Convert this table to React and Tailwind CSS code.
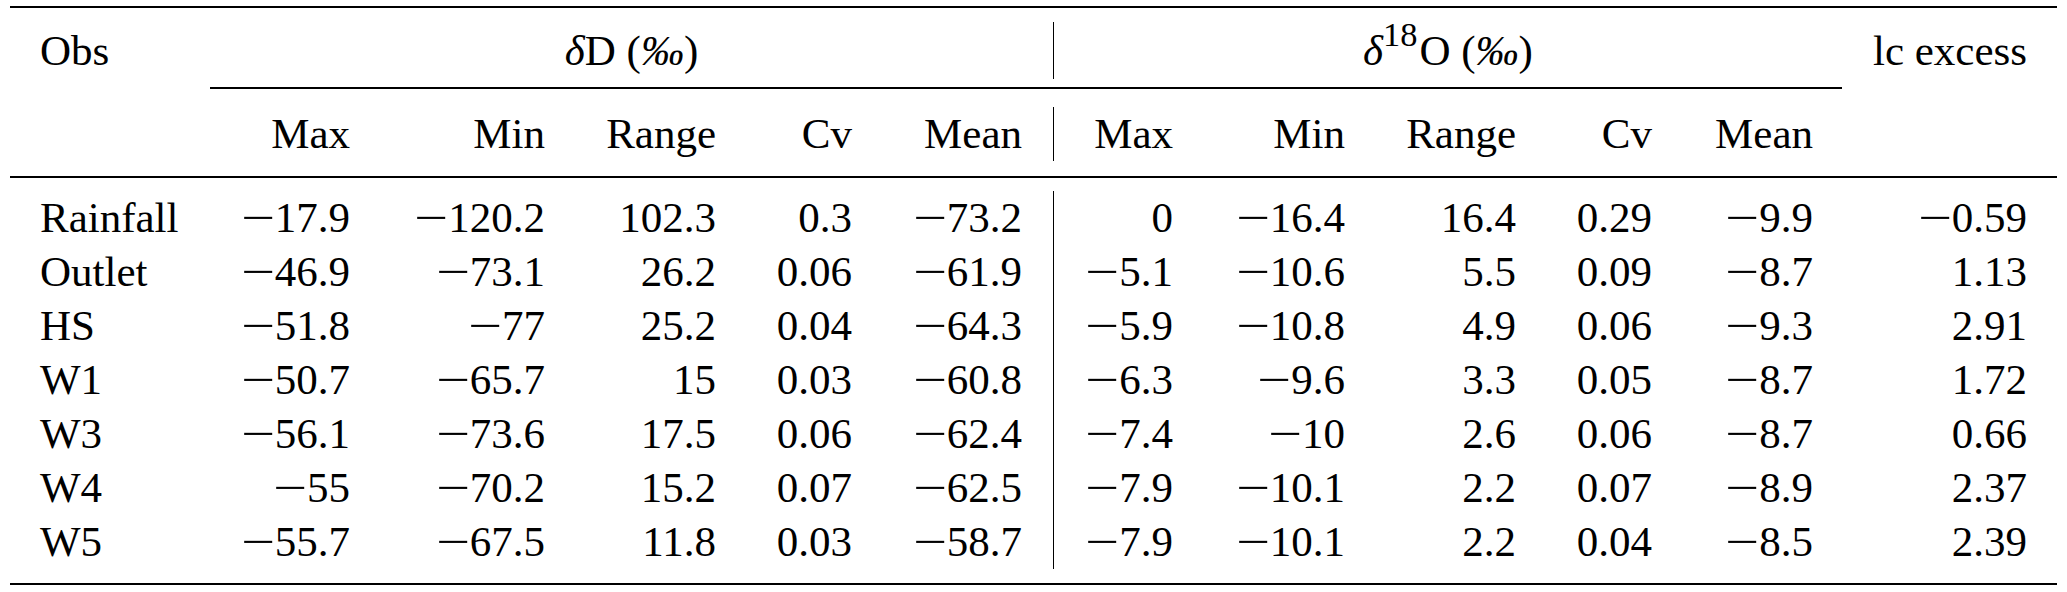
import React from "react";

const COLS =
  "grid grid-cols-[200px_140px_195px_171px_136px_202px_119px_172px_171px_136px_190px_215px]";

const rows = [
  ["Rainfall", "-17.9", "-120.2", "102.3", "0.3", "-73.2", "0", "-16.4", "16.4", "0.29", "-9.9", "-0.59"],
  ["Outlet", "-46.9", "-73.1", "26.2", "0.06", "-61.9", "-5.1", "-10.6", "5.5", "0.09", "-8.7", "1.13"],
  ["HS", "-51.8", "-77", "25.2", "0.04", "-64.3", "-5.9", "-10.8", "4.9", "0.06", "-9.3", "2.91"],
  ["W1", "-50.7", "-65.7", "15", "0.03", "-60.8", "-6.3", "-9.6", "3.3", "0.05", "-8.7", "1.72"],
  ["W3", "-56.1", "-73.6", "17.5", "0.06", "-62.4", "-7.4", "-10", "2.6", "0.06", "-8.7", "0.66"],
  ["W4", "-55", "-70.2", "15.2", "0.07", "-62.5", "-7.9", "-10.1", "2.2", "0.07", "-8.9", "2.37"],
  ["W5", "-55.7", "-67.5", "11.8", "0.03", "-58.7", "-7.9", "-10.1", "2.2", "0.04", "-8.5", "2.39"],
];

function Num({ v }) {
  if (v.startsWith("-")) {
    return (
      <>
        <span className="inline-block w-[0.778em] text-center">
          <span className="inline-block scale-x-[1.4]">−</span>
        </span>
        {v.slice(1)}
      </>
    );
  }
  return <>{v}</>;
}

function Cell({ v, i }) {
  if (i === 0) return <div className="pl-[30px] text-left whitespace-nowrap">{v}</div>;
  let cls = "text-right whitespace-nowrap";
  if (i === 5) cls += " pr-[31px] border-r-[1.5px] border-black";
  if (i === 10) cls += " pr-[29px]";
  if (i === 11) cls += " pr-[30px]";
  return (
    <div className={cls}>
      <Num v={v} />
    </div>
  );
}

const Permil = () => <span className="italic">‰</span>;

export default function App() {
  const sub = ["Max", "Min", "Range", "Cv", "Mean", "Max", "Min", "Range", "Cv", "Mean"];
  return (
    <div className="bg-white w-[2067px] h-[592px] px-[10px] pt-[6px] text-black text-[43px] [font-family:Liberation_Serif,serif]">
      <div className="h-[2px] bg-black" />

      <div className={`${COLS} mt-[14px] h-[57px] leading-[57px]`}>
        <div className="pl-[30px]">Obs</div>
        <div className="col-span-5 text-center border-r-[1.5px] border-black whitespace-nowrap">
          <span className="italic">δ</span>D (<Permil />)
        </div>
        <div className="col-span-5 text-center whitespace-nowrap">
          <span className="italic">δ</span>
          <sup className="text-[0.8em] relative -top-[0.56em] align-baseline leading-none pr-[2px]">18</sup>O (<Permil />)
        </div>
        <div className="text-right pr-[30px] whitespace-nowrap">lc excess</div>
      </div>

      <div className={`${COLS} mt-[8px] h-[2px]`}>
        <div className="col-start-2 col-span-10 bg-black" />
      </div>

      <div className={`${COLS} mt-[18px] h-[54px] leading-[54px]`}>
        <div />
        {sub.map((s, k) => {
          let cls = "text-right whitespace-nowrap";
          if (k === 4) cls += " pr-[31px] border-r-[1.5px] border-black";
          if (k === 9) cls += " pr-[29px]";
          return (
            <div key={k} className={cls}>
              {s}
            </div>
          );
        })}
        <div />
      </div>

      <div className="mt-[15px] h-[2px] bg-black" />

      <div className="mt-[13px] flex flex-col">
        {rows.map((r, ri) => (
          <div key={ri} className={`${COLS} h-[54px] leading-[54px]`}>
            {r.map((v, i) => (
              <Cell key={i} v={v} i={i} />
            ))}
          </div>
        ))}
      </div>

      <div className="mt-[14px] h-[2px] bg-black" />
    </div>
  );
}
